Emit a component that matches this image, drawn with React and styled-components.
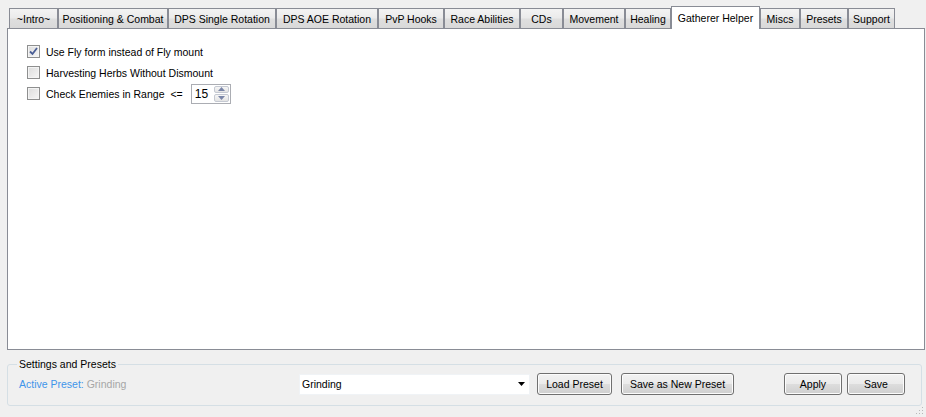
import React from "react";
import styled, { createGlobalStyle } from "styled-components";

const GlobalStyle = createGlobalStyle`
  html, body { margin: 0; padding: 0; background: #f0f0f0; }
  body { font-family: "Liberation Sans", Arial, sans-serif; font-size: 10.5px; color: #000; }
  * { box-sizing: border-box; }
`;

const Window = styled.div`
  width: 926px;
  height: 417px;
  display: flex;
  flex-direction: column;
  overflow: hidden;
`;

const TabArea = styled.div`
  padding: 5px 1px 0 7px;
  display: flex;
  flex-direction: column;
`;

const TabRow = styled.div`
  display: flex;
  align-items: flex-end;
  height: 23px;
  padding-left: 2px;
  position: relative;
  z-index: 2;
`;

const Tab = styled.div`
  width: ${(p) => p.$w}px;
  height: ${(p) => (p.$active ? 23 : 20)}px;
  margin-bottom: ${(p) => (p.$active ? -1 : 0)}px;
  border: 1px solid #898c95;
  border-bottom: none;
  background: ${(p) =>
    p.$active
      ? "#ffffff"
      : "linear-gradient(#f3f3f3 0%, #ebebeb 45%, #dedede 55%, #d9d9d9 100%)"};
  display: flex;
  align-items: center;
  justify-content: center;
  white-space: nowrap;
  font-size: 10.5px;
  padding-top: ${(p) => (p.$active ? 0 : 1)}px;
  position: relative;
  z-index: ${(p) => (p.$active ? 2 : 1)};
`;

const Panel = styled.div`
  height: 322px;
  background: #fff;
  border: 1px solid #898c95;
  padding: 12px 0 0 19px;
  display: flex;
  flex-direction: column;
`;

const Row = styled.div`
  display: flex;
  align-items: center;
  height: 21px;
`;

const Box = styled.span`
  width: 13px;
  height: 13px;
  border: 1px solid #8e8f8f;
  background: linear-gradient(135deg, #dcdcdc, #f6f6f6);
  box-shadow: inset 0 0 0 1px #f4f4f4;
  display: flex;
  align-items: center;
  justify-content: center;
  margin-right: 6px;
  flex: none;
`;

const Label = styled.span`
  white-space: nowrap;
`;

const Op = styled.span`
  margin: 0 8px 0 6px;
`;

const Spinner = styled.div`
  width: 40px;
  height: 20px;
  border: 1px solid #abadb3;
  background: #fff;
  display: flex;
  align-items: stretch;
`;

const SpinValue = styled.span`
  flex: 1;
  font-size: 12px;
  padding: 2px 0 0 3px;
`;

const SpinButtons = styled.div`
  width: 16px;
  display: flex;
  flex-direction: column;
  padding: 1px 1px 1px 0;
  gap: 1px;
`;

const SpinBtn = styled.div`
  flex: 1;
  border: 1px solid #c5c9d2;
  border-radius: 2px;
  background: linear-gradient(#f6f6f6, #e4e4e4);
  display: flex;
  align-items: center;
  justify-content: center;
`;

const Group = styled.fieldset`
  margin: 8px 4px 0 7px;
  padding: 3px 16px 10px 11px;
  border: 1px solid #d5dfe5;
  border-radius: 3px;
  min-width: 0;
`;

const Legend = styled.legend`
  margin-left: -2px;
  padding: 0 2px;
  font-size: 10.5px;
  color: #000;
`;

const BottomRow = styled.div`
  display: flex;
  align-items: center;
  height: 22px;
`;

const Active = styled.div`
  flex: 1;
  white-space: nowrap;
  color: #3e95ea;
`;

const Muted = styled.span`
  color: #a6a6a6;
`;

const Combo = styled.div`
  width: 231px;
  height: 21px;
  background: #fff;
  border: 1px solid #f0f3f6;
  display: flex;
  align-items: center;
  justify-content: space-between;
  padding: 0 4px 0 2px;
  font-size: 10.5px;
`;

const Button = styled.button`
  width: ${(p) => p.$w}px;
  height: 22px;
  margin-left: ${(p) => p.$gap}px;
  border: 1px solid #707070;
  border-radius: 3px;
  background: linear-gradient(#f2f2f2 0%, #ebebeb 48%, #dddddd 52%, #cfcfcf 100%);
  box-shadow: inset 0 0 0 1px #fcfcfc;
  font-family: "Liberation Sans", Arial, sans-serif;
  font-size: 10.5px;
  color: #000;
  padding: 0;
`;

const Footer = styled.div`
  flex: 1;
  display: flex;
  justify-content: flex-end;
  align-items: flex-end;
  padding: 0 2px 2px 0;
`;

const tabs = [
  ["~Intro~", 49],
  ["Positioning & Combat", 110],
  ["DPS Single Rotation", 108],
  ["DPS AOE Rotation", 102],
  ["PvP Hooks", 66],
  ["Race Abilities", 76],
  ["CDs", 43],
  ["Movement", 62],
  ["Healing", 46],
  ["Gatherer Helper", 89],
  ["Miscs", 40],
  ["Presets", 48],
  ["Support", 47],
];

const Check = () => (
  <svg width="9" height="9" viewBox="0 0 9 9">
    <path d="M1 4.5 L3.5 7 L8 1" fill="none" stroke="#4a5e96" strokeWidth="1.8" />
  </svg>
);

const Tri = ({ up }) => (
  <svg width="7" height="4" viewBox="0 0 7 4">
    <path d={up ? "M0 4 L3.5 0 L7 4 Z" : "M0 0 L3.5 4 L7 0 Z"} fill="#7a86a8" />
  </svg>
);

const CheckRow = ({ checked, children }) => (
  <Row>
    <Box>{checked && <Check />}</Box>
    {children}
  </Row>
);

export default function App() {
  return (
    <Window>
      <GlobalStyle />
      <TabArea>
        <TabRow>
          {tabs.map(([t, w]) => (
            <Tab key={t} $w={w} $active={t === "Gatherer Helper"}>
              {t}
            </Tab>
          ))}
        </TabRow>
        <Panel>
          <CheckRow checked>
            <Label>Use Fly form instead of Fly mount</Label>
          </CheckRow>
          <CheckRow>
            <Label>Harvesting Herbs Without Dismount</Label>
          </CheckRow>
          <CheckRow>
            <Label>Check Enemies in Range</Label>
            <Op>&lt;=</Op>
            <Spinner>
              <SpinValue>15</SpinValue>
              <SpinButtons>
                <SpinBtn><Tri up /></SpinBtn>
                <SpinBtn><Tri /></SpinBtn>
              </SpinButtons>
            </Spinner>
          </CheckRow>
        </Panel>
      </TabArea>
      <Group>
        <Legend>Settings and Presets</Legend>
        <BottomRow>
          <Active>
            Active Preset: <Muted>Grinding</Muted>
          </Active>
          <Combo>
            <span>Grinding</span>
            <svg width="7" height="4" viewBox="0 0 7 4">
              <path d="M0 0 L3.5 4 L7 0 Z" fill="#000" />
            </svg>
          </Combo>
          <Button $w={75} $gap={7}>Load Preset</Button>
          <Button $w={113} $gap={9}>Save as New Preset</Button>
          <Button $w={58} $gap={50}>Apply</Button>
          <Button $w={58} $gap={5}>Save</Button>
        </BottomRow>
      </Group>
      <Footer>
        <svg width="8" height="8" viewBox="0 0 8 8">
          <rect x="6" y="0" width="1" height="1" fill="#b8b8b8" />
          <rect x="3" y="3" width="1" height="1" fill="#b8b8b8" />
          <rect x="6" y="3" width="1" height="1" fill="#b8b8b8" />
          <rect x="0" y="6" width="1" height="1" fill="#b8b8b8" />
          <rect x="3" y="6" width="1" height="1" fill="#b8b8b8" />
          <rect x="6" y="6" width="1" height="1" fill="#b8b8b8" />
        </svg>
      </Footer>
    </Window>
  );
}
